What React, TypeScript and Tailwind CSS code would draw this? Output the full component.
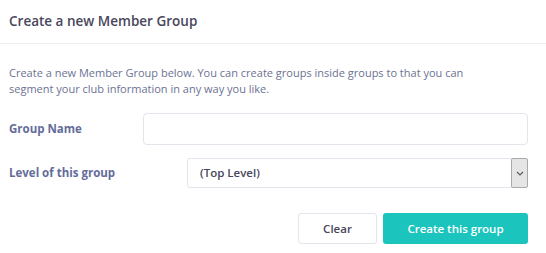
import React from 'react';

const App: React.FC = () => {
  return (
    <div className="w-[546px] h-[253px] bg-white overflow-hidden" style={{ fontFamily: '"Open Sans", "Liberation Sans", sans-serif' }}>
      <div className="h-[44px] flex items-center px-[9px] border-b border-[#ebedf3]">
        <h3 className="text-[13.5px] font-semibold text-[#48465b]">Create a new Member Group</h3>
      </div>

      <div className="pl-[9px] pr-[18px] pt-[21px]">
        <p className="text-[11px] leading-[16px] text-[#6c7293] w-[500px]">
          Create a new Member Group below. You can create groups inside groups to that you can segment your club information in any way you like.
        </p>

        <div className="mt-[16px] flex items-center h-[32px]">
          <label className="w-[134px] shrink-0 text-[11.5px] font-bold text-[#646c9a]">Group Name</label>
          <input
            type="text"
            className="flex-1 h-[32px] rounded-[4px] border border-[#e2e5ec] bg-white outline-none"
          />
        </div>

        <div className="mt-[13px] flex items-center h-[30px]">
          <label className="w-[178px] shrink-0 text-[11.5px] font-bold text-[#646c9a]">Level of this group</label>
          <div className="flex-1 h-[30px] flex items-stretch border border-[#e2e5ec] rounded-[3px]">
            <div className="flex-1 flex items-center pl-[12px] text-[11.5px] font-semibold text-[#48465b]">(Top Level)</div>
            <div className="w-[17px] flex items-center justify-center bg-[#e5e5e5] border border-[#a9a9a9] rounded-[2px] -my-px -mr-px">
              <svg width="8" height="5" viewBox="0 0 8 5" fill="none">
                <path d="M1 1l3 3 3-3" stroke="#555" strokeWidth="1.1" />
              </svg>
            </div>
          </div>
        </div>

        <div className="mt-[25px] flex justify-end gap-[6px]">
          <button className="w-[79px] h-[31px] rounded-[3px] border border-[#e2e5ec] bg-white text-[11.5px] font-semibold text-[#48465b]">
            Clear
          </button>
          <button className="w-[145px] h-[31px] rounded-[3px] bg-[#1bc5bd] text-[11.5px] font-semibold text-white">
            Create this group
          </button>
        </div>
      </div>
    </div>
  );
};

export default App;
